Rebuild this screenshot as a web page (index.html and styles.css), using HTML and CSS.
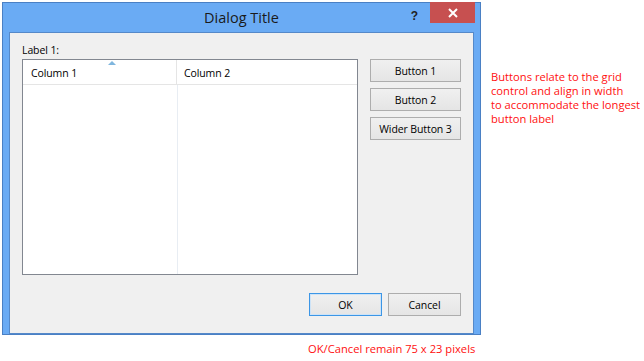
FILE: index.html
```html
<!DOCTYPE html>
<html>
<head>
<meta charset="utf-8">
<link rel="stylesheet" href="styles.css">
</head>
<body>
<div class="page">
  <div class="top">
    <div class="window">
      <div class="titlebar">
        <div class="title">Dialog Title</div>
        <div class="controls">
          <span class="help">?</span>
          <span class="close"><svg width="10" height="10" viewBox="0 0 10 10"><path d="M1 1L9 9M9 1L1 9" stroke="#fff" stroke-width="2"/></svg></span>
        </div>
      </div>
      <div class="client">
        <div class="label">Label 1:</div>
        <div class="main">
          <div class="grid">
            <div class="header">
              <div class="hcell c1">Column 1<span class="sort"></span></div>
              <div class="hcell c2">Column 2</div>
            </div>
            <div class="body">
              <div class="bcol c1"></div>
              <div class="bcol c2"></div>
            </div>
          </div>
          <div class="side">
            <button class="btn">Button 1</button>
            <button class="btn">Button 2</button>
            <button class="btn">Wider Button 3</button>
          </div>
        </div>
        <div class="footer">
          <button class="btn small default">OK</button>
          <button class="btn small">Cancel</button>
        </div>
      </div>
    </div>
    <div class="note">Buttons relate to the grid<br>control and align in width<br>to accommodate the longest<br>button label</div>
  </div>
  <div class="caption">OK/Cancel remain 75 x 23 pixels</div>
</div>
</body>
</html>
```
FILE: styles.css
```css
html, body {
  margin: 0;
  padding: 0;
  background: #ffffff;
}
body {
  width: 644px;
  height: 361px;
  overflow: hidden;
  font-family: "Open Sans", "Noto Sans", sans-serif;
  font-size: 10.5px;
  letter-spacing: -0.1px;
  color: #000;
}
.page {
  padding: 2px 0 0 2px;
}
.top {
  display: flex;
  align-items: flex-start;
}
.window {
  flex: none;
  width: 477px;
  height: 331px;
  border: 1px solid #4a80c4;
  background: #6aabf4;
  display: flex;
  flex-direction: column;
}
.titlebar {
  height: 29px;
  display: grid;
  grid-template-columns: 1fr auto 1fr;
  align-items: start;
}
.title {
  grid-column: 2;
  font-size: 14.5px;
  letter-spacing: 0;
  line-height: 29px;
  color: #1a1a1a;
}
.controls {
  grid-column: 3;
  justify-self: end;
  display: flex;
  align-items: flex-start;
  margin-top: -1px;
  margin-right: 5px;
}
.help {
  font-family: "Liberation Sans", sans-serif;
  font-weight: bold;
  font-size: 12px;
  color: #222;
  line-height: 12px;
  margin-top: 8px;
  margin-right: 12px;
}
.close {
  width: 45px;
  height: 21px;
  background: #c75050;
  display: flex;
  align-items: center;
  justify-content: center;
}
.close svg { display: block; }
.client {
  margin: 0 6px;
  height: 294px;
  border: 1px solid #5589c9;
  background: #f0f0f0;
  padding: 10px 12px 11px 12px;
  box-sizing: content-box;
  display: flex;
  flex-direction: column;
}
.label {
  line-height: 15px;
  height: 16px;
  color: #000;
}
.main {
  display: flex;
  gap: 12px;
  align-items: flex-start;
}
.grid {
  width: 334px;
  height: 214px;
  border: 1px solid #828790;
  background: #fff;
  display: flex;
  flex-direction: column;
}
.header {
  display: flex;
  height: 24px;
  border-bottom: 1px solid #e5e5e5;
}
.hcell {
  position: relative;
  line-height: 24px;
  padding-top: 1px;
  box-sizing: border-box;
}
.hcell.c1 {
  width: 154px;
  padding-left: 8px;
  border-right: 1px solid #e5e5e5;
}
.hcell.c2 {
  flex: 1;
  padding-left: 7px;
}
.sort {
  position: absolute;
  left: 85px;
  top: 1px;
  width: 0;
  height: 0;
  border-left: 4px solid transparent;
  border-right: 4px solid transparent;
  border-bottom: 4px solid #7fb6de;
}
.body {
  flex: 1;
  display: flex;
}
.bcol.c1 {
  width: 154px;
  border-right: 1px solid #e8edf3;
}
.bcol.c2 { flex: 1; }
.side {
  display: flex;
  flex-direction: column;
  gap: 6px;
  width: 91px;
}
.btn {
  font-family: "Open Sans", "Noto Sans", sans-serif;
  font-size: 10.5px;
  letter-spacing: -0.1px;
  color: #000;
  height: 23px;
  width: 91px;
  border: 1px solid #adadad;
  background: linear-gradient(#f0f0f0, #e5e5e5);
  padding: 0;
  margin: 0;
  line-height: 20px;
}
.footer {
  margin-top: 18px;
  display: flex;
  justify-content: flex-end;
  gap: 6px;
}
.btn.small {
  width: 73px;
}
.btn.default {
  border: 1px solid #3c96e6;
  box-shadow: inset 0 0 0 1px #cde3f7;
}
.note {
  margin-left: 10px;
  margin-top: 68px;
  color: #ff1010;
  font-size: 11.2px;
  letter-spacing: 0;
  line-height: 14px;
  white-space: nowrap;
}
.caption {
  margin-left: 306px;
  margin-top: 7px;
  color: #ff1010;
  font-size: 11.2px;
  letter-spacing: 0;
  line-height: 14px;
  white-space: nowrap;
}
```
